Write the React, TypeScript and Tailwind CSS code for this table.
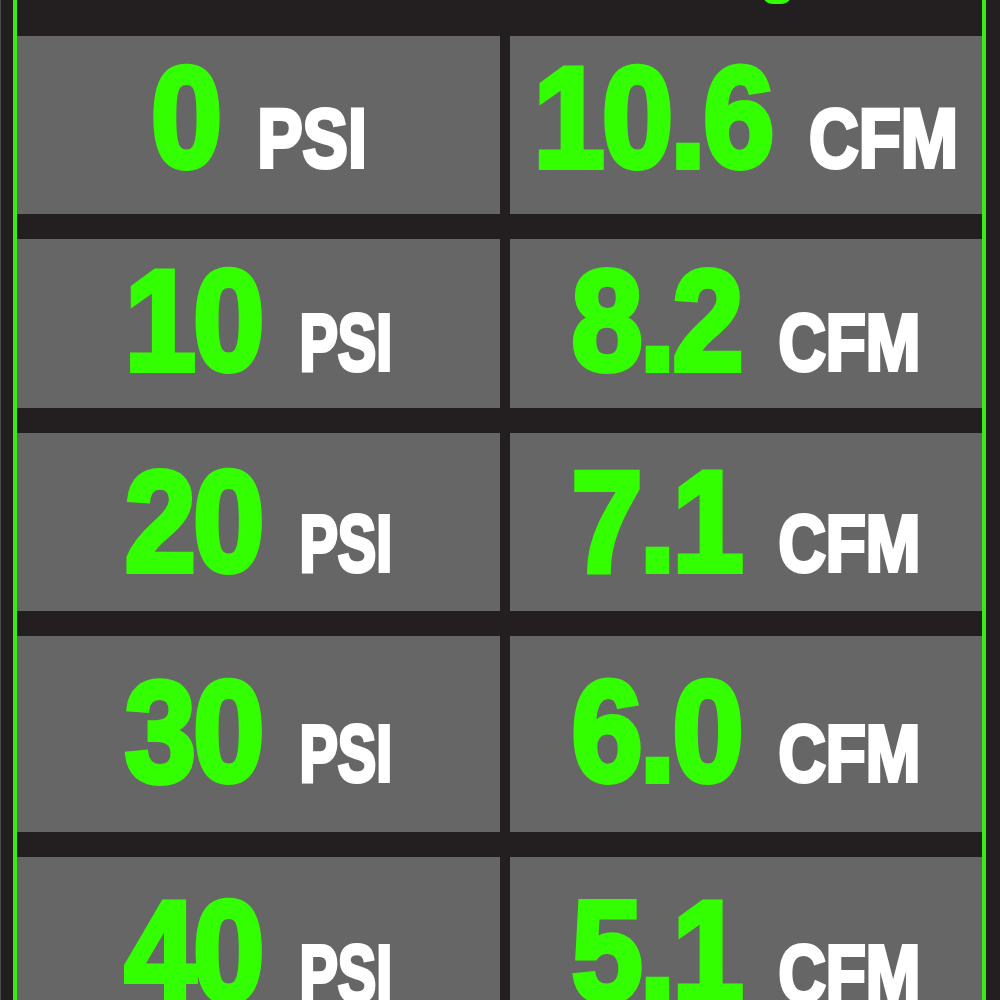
const rows = [
  { psi: '0', cfm: '10.6', pad: 'pb-[14px]', unitSize: 'text-[84px]', psiFix: 'scale-x-[0.9] -mr-[14px]' },
  { psi: '10', cfm: '8.2', pad: 'pb-[6px]', unitSize: 'text-[80px]', psiFix: 'scale-x-[0.8] -mr-[26px]' },
  { psi: '20', cfm: '7.1', pad: '', unitSize: 'text-[80px]', psiFix: 'scale-x-[0.8] -mr-[26px]' },
  { psi: '30', cfm: '6.0', pad: 'pb-[4px]', unitSize: 'text-[80px]', psiFix: 'scale-x-[0.8] -mr-[26px]' },
  { psi: '40', cfm: '5.1', pad: '', unitSize: 'text-[80px]', psiFix: 'scale-x-[0.8] -mr-[26px]' },
]

function Cell({ value, unit, pad, unitSize, unitFix }: { value: string; unit: string; pad: string; unitSize: string; unitFix: string }) {
  return (
    <div className={`flex items-center justify-center bg-[#666666] ${pad}`}>
      <div className="flex scale-x-[0.9] items-baseline">
        <span className="text-[142px] leading-none font-bold tracking-[-3px] text-[#33ff00] [-webkit-text-stroke:6px_#33ff00]">
          {value}
        </span>
        <span
          className={`ml-[42px] ${unitFix} inline-block origin-left ${unitSize} leading-none font-bold text-white [-webkit-text-stroke:4px_#ffffff]`}
        >
          {unit}
        </span>
      </div>
    </div>
  )
}

export default function App() {
  return (
    <div className="h-[1000px] overflow-hidden border-l border-[#4a4a4a] bg-[#231f20] pl-[12px] pr-[14px] font-['Liberation_Sans',Arial,sans-serif]">
      <div className="h-full border-x-4 border-[#39ec17]">
        {/* header strip, only the bottom of a green mark shows */}
        <div className="relative h-[36px]">
          <span className="absolute left-[745px] top-[-18px] h-[22px] w-[30px] rounded-full border-[4px] border-[#33ff00]" />
        </div>
        <div className="grid grid-cols-[483px_472px] grid-rows-[178px_169px_178px_196px_190px] gap-x-[10px] gap-y-[25px]">
          {rows.map((r) => [
            <Cell key={r.psi + 'p'} value={r.psi} unit="PSI" pad={r.pad} unitSize={r.unitSize} unitFix={r.psiFix} />,
            <Cell
              key={r.psi + 'c'}
              value={r.cfm}
              unit="CFM"
              pad={r.pad}
              unitSize={r.unitSize}
              unitFix="scale-x-[0.91] -mr-[16px]"
            />,
          ])}
        </div>
      </div>
    </div>
  )
}
